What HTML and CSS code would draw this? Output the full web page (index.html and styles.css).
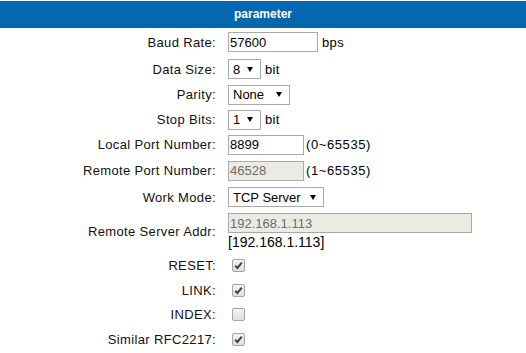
FILE: index.html
```html
<!DOCTYPE html>
<html lang="en">
<head>
    <meta charset="UTF-8">
    <title>parameter</title>
    <link rel="stylesheet" href="styles.css">
</head>
<body>
    <div class="header">parameter</div>
    <div class="form">
        <div class="label">Baud Rate:</div>
        <div class="field"><input class="text w-baud" type="text" value="57600"> bps</div>

        <div class="label">Data Size:</div>
        <div class="field"><span class="select w-small">8<i class="arrow"></i></span> bit</div>

        <div class="label">Parity:</div>
        <div class="field"><span class="select w-parity">None<i class="arrow"></i></span></div>

        <div class="label">Stop Bits:</div>
        <div class="field"><span class="select w-small">1<i class="arrow"></i></span> bit</div>

        <div class="label">Local Port Number:</div>
        <div class="field"><input class="text w-port" type="text" value="8899"> <span class="range">(0~65535)</span></div>

        <div class="label">Remote Port Number:</div>
        <div class="field"><input class="text w-port" type="text" value="46528" disabled> <span class="range">(1~65535)</span></div>

        <div class="label">Work Mode:</div>
        <div class="field"><span class="select w-mode">TCP Server<i class="arrow"></i></span></div>

        <div class="label">Remote Server Addr:</div>
        <div class="field stack">
            <input class="text w-addr" type="text" value="192.168.1.113" disabled>
            <span class="addr-note">[192.168.1.113]</span>
        </div>

        <div class="label">RESET:</div>
        <div class="field"><span class="check"><svg viewBox="0 0 13 13" width="13" height="13"><path d="M3.2 6.8 L5.4 9 L9.8 3.6" /></svg></span></div>

        <div class="label">LINK:</div>
        <div class="field"><span class="check"><svg viewBox="0 0 13 13" width="13" height="13"><path d="M3.2 6.8 L5.4 9 L9.8 3.6" /></svg></span></div>

        <div class="label">INDEX:</div>
        <div class="field"><span class="check"></span></div>

        <div class="label">Similar RFC2217:</div>
        <div class="field"><span class="check"><svg viewBox="0 0 13 13" width="13" height="13"><path d="M3.2 6.8 L5.4 9 L9.8 3.6" /></svg></span></div>
    </div>
</body>
</html>
```

FILE: styles.css
```css
body {
    margin: 0;
    font-family: "Liberation Sans", Arial, sans-serif;
    font-size: 13px;
    color: #000;
    background: #fff;
}
.header {
    margin-top: 1px;
    height: 27px;
    line-height: 27px;
    background-color: #0567ad;
    color: #fff;
    font-weight: bold;
    font-size: 12px;
    text-align: center;
}
.form {
    display: grid;
    grid-template-columns: 216px 1fr;
    grid-template-rows: 28px 26px 25px 25px 25px 27px 26px 42px 26px 24px 24px 26px;
    column-gap: 12px;
}
.label {
    display: flex;
    align-items: center;
    justify-content: flex-end;
    white-space: nowrap;
    letter-spacing: 0.35px;
    color: #111;
}
.field {
    display: flex;
    align-items: center;
    gap: 4px;
    white-space: nowrap;
    letter-spacing: 0.35px;
}
.range {
    margin-left: -2px;
    letter-spacing: 0.6px;
}
.stack {
    flex-direction: column;
    align-items: flex-start;
    justify-content: center;
    gap: 2px;
}
.text {
    box-sizing: border-box;
    height: 20px;
    margin: 0;
    padding: 0 1px;
    border: 1px solid #a9a9a9;
    font-family: "Liberation Sans", Arial, sans-serif;
    font-size: 13px;
    letter-spacing: 0;
    color: #000;
    background: #fff;
}
.text:disabled {
    background: #ebebe4;
    color: #6d6d6d;
}
.w-baud { width: 90px; }
.w-port { width: 76px; }
.w-addr { width: 244px; }
.select {
    box-sizing: border-box;
    display: inline-flex;
    align-items: center;
    height: 20px;
    padding: 0 7px 0 4px;
    border: 1px solid #a9a9a9;
    background: #fff;
    font-size: 13px;
    letter-spacing: 0;
}
.arrow {
    margin-left: auto;
    width: 0;
    height: 0;
    border-left: 3px solid transparent;
    border-right: 3px solid transparent;
    border-top: 5px solid #000;
}
.w-small { width: 33px; }
.w-parity { width: 62px; }
.w-mode { width: 96px; }
.addr-note {
    font-size: 14px;
    line-height: 14px;
    letter-spacing: 0;
}
.check {
    box-sizing: border-box;
    display: inline-block;
    width: 13px;
    height: 13px;
    margin-left: 4px;
    border: 1px solid #a4a4a4;
    border-radius: 2px;
    background: linear-gradient(#f4f4f4, #dedede);
    position: relative;
}
.check svg {
    position: absolute;
    left: -1px;
    top: -1px;
}
.check path {
    fill: none;
    stroke: #444;
    stroke-width: 2;
}
```
